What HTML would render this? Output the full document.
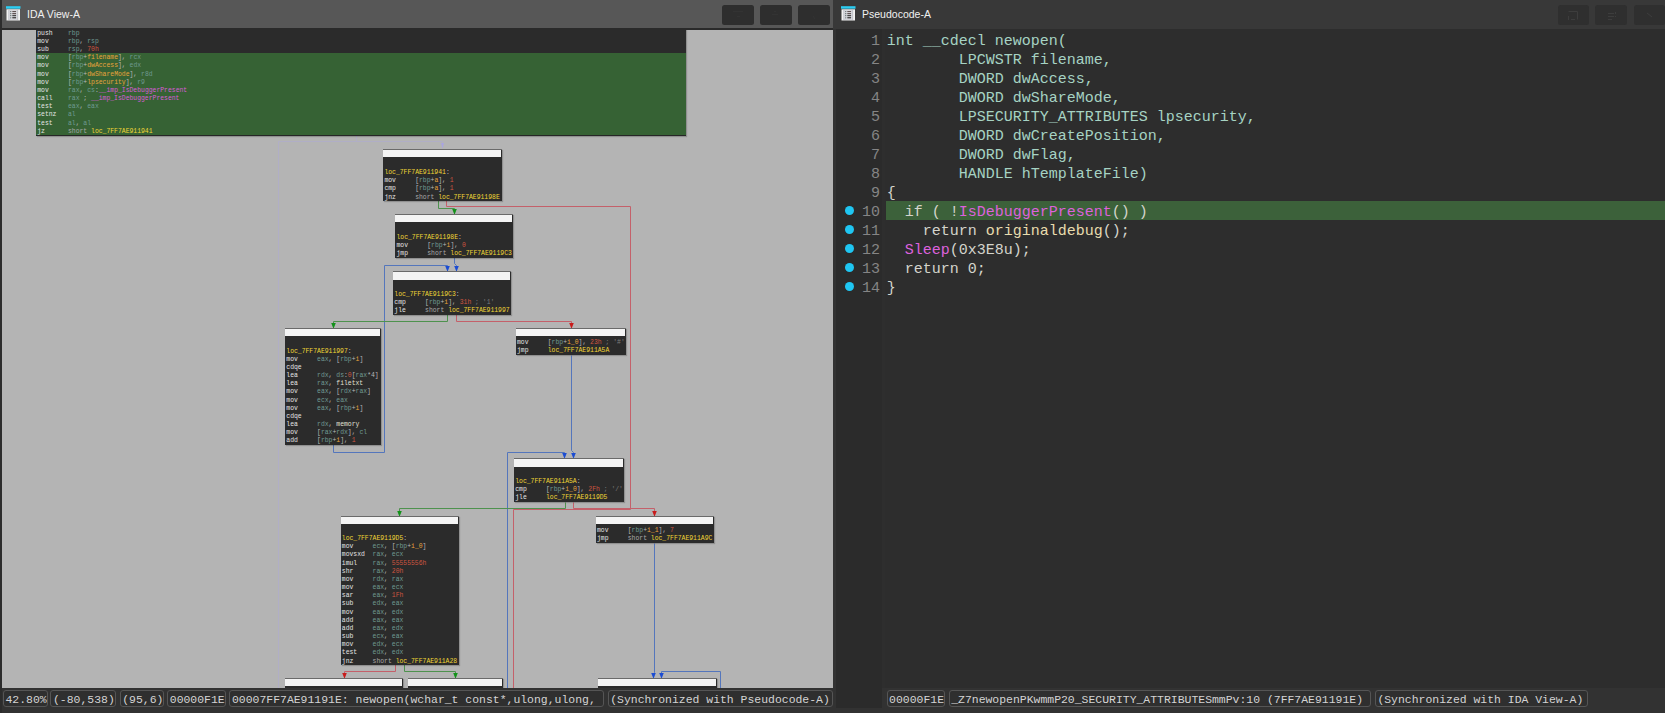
<!DOCTYPE html><html><head><meta charset="utf-8"><style>
*{margin:0;padding:0;box-sizing:border-box}
html,body{width:1665px;height:713px;overflow:hidden;background:#323232}
body{position:relative;font-family:"Liberation Sans",sans-serif}
.abs{position:absolute}
#lt{position:absolute;left:2px;top:0;width:831px;height:28px;background:#575757}
#lline{position:absolute;left:2px;top:28px;width:831px;height:2px;background:#2a2a2a}
#graph{position:absolute;left:2px;top:30px;width:831px;height:658px;background:#b4b4b4;overflow:hidden}
#ginner{position:absolute;left:-2px;top:-30px;width:833px;height:690px}
.nd{position:absolute;overflow:hidden;box-shadow:1px 1px 1px rgba(0,0,0,0.2);border-top:1px solid #6a6a6a}
.hd{position:absolute;left:0;right:1px;top:0;background:#f4f4f4}
.row{position:absolute;left:1.2px;height:8.17px;line-height:8.17px;font-family:"Liberation Mono",monospace;font-size:6.417px;white-space:pre}
.edges{position:absolute;left:0;top:0}
.btn{position:absolute;top:5px;width:31.5px;height:20px;border-radius:2.5px}
#rt{position:absolute;left:833px;top:0;width:832px;height:29px;background:#383838}
#code{position:absolute;left:885px;top:29px;width:780px;height:658.5px;background:#2d2d2d}
#gut{position:absolute;left:836px;top:29px;width:46px;height:678.5px;background:#2b2b2b}
#gut2{position:absolute;left:882px;top:29px;width:3px;height:659px;background:#2e2e2e}
.pl{position:absolute;left:886.7px;height:19px;line-height:19px;font-family:"Liberation Mono",monospace;font-size:15px;white-space:pre}
.ln{position:absolute;left:838px;width:42px;text-align:right;height:19px;line-height:19px;font-family:"Liberation Mono",monospace;font-size:15px;color:#858585}
.dot{position:absolute;left:845px;width:9.2px;height:9.2px;border-radius:50%;background:#1fc6f2}
#hl{position:absolute;left:886.2px;top:201px;width:779px;height:18.8px;background:#3c613a}
.sb{position:absolute;top:690px;height:17px;border:1px solid #555;border-radius:3px;background:#2f2f2f;font-family:"Liberation Mono",monospace;font-size:11.45px;line-height:14px;color:#d4d4d4;white-space:pre;overflow:hidden}
.sb span{position:absolute;left:1.6px;top:1.6px}
.ttl{position:absolute;top:6px;font-size:11.3px;color:#f0f0f0;line-height:16px;transform-origin:0 0;transform:scaleX(0.93)}
</style></head><body><div class="abs" style="left:0;top:0;width:2px;height:713px;background:#2c2c2c"></div><div id="lt"></div><div id="lline"></div><div class="abs" style="left:6px;top:5.5px"><svg width="15" height="15" viewBox="0 0 15 15"><rect x="0" y="0.2" width="14.5" height="2.5" fill="#2ccdf2"/><rect x="0.5" y="3.3" width="13.5" height="11.2" fill="#f2f2f2"/><rect x="2.2" y="3.8" width="10" height="10.2" fill="#c4c6cc"/><rect x="3.4" y="4.2" width="7.6" height="9.4" fill="#dcdde2"/><circle cx="4.8" cy="5.6" r="0.6" fill="#455"/><rect x="6.3" y="5.1" width="3.8" height="1" fill="#544"/><circle cx="4.8" cy="7.7" r="0.6" fill="#455"/><rect x="6.3" y="7.2" width="3.8" height="1" fill="#433"/><circle cx="4.8" cy="9.7" r="0.6" fill="#455"/><rect x="6.3" y="9.2" width="3.8" height="1" fill="#222"/><circle cx="4.8" cy="11.8" r="0.6" fill="#455"/><rect x="6.3" y="11.3" width="3.8" height="1" fill="#111"/></svg></div><div class="ttl" style="left:27px">IDA View-A</div><div class="btn" style="left:722.2px;background:#2e2e2e"></div><div class="btn" style="left:760.3px;background:#2e2e2e"></div><div class="btn" style="left:798.4px;background:#2e2e2e"></div><div id="graph"><div id="ginner"><svg class="edges" width="833" height="690" viewBox="0 0 833 690"><polyline fill="none" stroke="#b0aec6" stroke-width="1" points="356.5,135.5 356.5,141.5 278.5,141.5 278.5,690.5"/><polyline fill="none" stroke="#b0aec6" stroke-width="1" points="356.5,141.5 442.5,141.5 442.5,147.5"/><polygon fill="#a9a5e0" points="441.0,143.0 444.0,143.0 442.5,148.7"/><polyline fill="none" stroke="#4e924e" stroke-width="1" points="438.5,200.5 438.5,208.5 454.5,208.5 454.5,213.5"/><polygon fill="#13921a" points="452.2,209.0 456.8,209.0 454.5,214.7"/><polyline fill="none" stroke="#c4606a" stroke-width="1" points="446.5,200.5 446.5,206.5 630.5,206.5 630.5,509.5 513.5,509.5 513.5,690.5"/><polyline fill="none" stroke="#5476bc" stroke-width="1" points="454.5,257.5 454.5,263.5 456.5,265.5 456.5,270.5"/><polygon fill="#1c4cd2" points="454.2,266.0 458.8,266.0 456.5,271.7"/><polyline fill="none" stroke="#5476bc" stroke-width="1" points="333.5,444.5 333.5,452.5 384.5,452.5 384.5,265.5 447.5,265.5 447.5,270.5"/><polygon fill="#1c4cd2" points="445.2,266.0 449.8,266.0 447.5,271.7"/><polyline fill="none" stroke="#4e924e" stroke-width="1" points="447.5,314.5 447.5,321.5 333.5,321.5 333.5,327.5"/><polygon fill="#13921a" points="331.2,323.0 335.8,323.0 333.5,328.7"/><polyline fill="none" stroke="#c4606a" stroke-width="1" points="456.5,314.5 456.5,321.5 571.5,321.5 571.5,327.5"/><polygon fill="#c81c1c" points="569.2,323.0 573.8,323.0 571.5,328.7"/><polyline fill="none" stroke="#5476bc" stroke-width="1" points="571.5,355.5 571.5,450.5 573.5,452.5 573.5,457.5"/><polygon fill="#1c4cd2" points="571.2,453.0 575.8,453.0 573.5,458.7"/><polyline fill="none" stroke="#5476bc" stroke-width="1" points="507.5,690.5 507.5,452.5 564.5,452.5 564.5,457.5"/><polygon fill="#1c4cd2" points="562.2,453.0 566.8,453.0 564.5,458.7"/><polyline fill="none" stroke="#4e924e" stroke-width="1" points="565.5,502.5 565.5,508.5 399.5,508.5 399.5,515.5"/><polygon fill="#13921a" points="397.2,511.0 401.8,511.0 399.5,516.7"/><polyline fill="none" stroke="#c4606a" stroke-width="1" points="573.5,502.5 573.5,508.5 654.5,508.5 654.5,515.5"/><polygon fill="#c81c1c" points="652.2,511.0 656.8,511.0 654.5,516.7"/><polyline fill="none" stroke="#5476bc" stroke-width="1" points="654.5,543.5 654.5,672.5 653.5,674.5 653.5,677.5"/><polygon fill="#1c4cd2" points="651.2,673.0 655.8,673.0 653.5,678.7"/><polyline fill="none" stroke="#5476bc" stroke-width="1" points="720.5,690.5 720.5,671.5 661.5,671.5 661.5,677.5"/><polygon fill="#1c4cd2" points="659.2,673.0 663.8,673.0 661.5,678.7"/><polyline fill="none" stroke="#c4606a" stroke-width="1" points="395.5,664.5 395.5,671.5 344.5,671.5 344.5,677.5"/><polygon fill="#c81c1c" points="342.2,673.0 346.8,673.0 344.5,678.7"/><polyline fill="none" stroke="#4e924e" stroke-width="1" points="404.5,664.5 404.5,671.5 455.5,671.5 455.5,677.5"/><polygon fill="#13921a" points="453.2,673.0 457.8,673.0 455.5,678.7"/></svg><div class="nd" style="left:36px;top:28px;width:650.4px;height:107.5px;background:#2b2b2b;border-bottom:1.3px solid #262626"><div style="position:absolute;left:0;right:0;top:24.2px;height:82px;background:#366234"></div><div class="row" style="top:0.71px"><span style="color:#e4e4e4">push&#160;&#160;&#160;&#160;</span><span style="color:#6f9a92">rbp</span></div><div class="row" style="top:8.88px"><span style="color:#e4e4e4">mov&#160;&#160;&#160;&#160;&#160;</span><span style="color:#6f9a92">rbp</span><span style="color:#b8b8b8">,&#160;</span><span style="color:#6f9a92">rsp</span></div><div class="row" style="top:17.05px"><span style="color:#e4e4e4">sub&#160;&#160;&#160;&#160;&#160;</span><span style="color:#6f9a92">rsp</span><span style="color:#b8b8b8">,&#160;</span><span style="color:#cf5540">70h</span></div><div class="row" style="top:25.22px"><span style="color:#e4e4e4">mov&#160;&#160;&#160;&#160;&#160;</span><span style="color:#b8b8b8">[</span><span style="color:#6f9a92">rbp</span><span style="color:#b8b8b8">+</span><span style="color:#e8a23c">filename</span><span style="color:#b8b8b8">],&#160;</span><span style="color:#6f9a92">rcx</span></div><div class="row" style="top:33.39px"><span style="color:#e4e4e4">mov&#160;&#160;&#160;&#160;&#160;</span><span style="color:#b8b8b8">[</span><span style="color:#6f9a92">rbp</span><span style="color:#b8b8b8">+</span><span style="color:#e8a23c">dwAccess</span><span style="color:#b8b8b8">],&#160;</span><span style="color:#6f9a92">edx</span></div><div class="row" style="top:41.57px"><span style="color:#e4e4e4">mov&#160;&#160;&#160;&#160;&#160;</span><span style="color:#b8b8b8">[</span><span style="color:#6f9a92">rbp</span><span style="color:#b8b8b8">+</span><span style="color:#e8a23c">dwShareMode</span><span style="color:#b8b8b8">],&#160;</span><span style="color:#6f9a92">r8d</span></div><div class="row" style="top:49.73px"><span style="color:#e4e4e4">mov&#160;&#160;&#160;&#160;&#160;</span><span style="color:#b8b8b8">[</span><span style="color:#6f9a92">rbp</span><span style="color:#b8b8b8">+</span><span style="color:#e8a23c">lpsecurity</span><span style="color:#b8b8b8">],&#160;</span><span style="color:#6f9a92">r9</span></div><div class="row" style="top:57.90px"><span style="color:#e4e4e4">mov&#160;&#160;&#160;&#160;&#160;</span><span style="color:#6f9a92">rax</span><span style="color:#b8b8b8">,&#160;</span><span style="color:#6f9a92">cs</span><span style="color:#b8b8b8">:</span><span style="color:#d85cd8">__imp_IsDebuggerPresent</span></div><div class="row" style="top:66.08px"><span style="color:#e4e4e4">call&#160;&#160;&#160;&#160;</span><span style="color:#6f9a92">rax</span><span style="color:#b8b8b8">&#160;;&#160;</span><span style="color:#d85cd8">__imp_IsDebuggerPresent</span></div><div class="row" style="top:74.25px"><span style="color:#e4e4e4">test&#160;&#160;&#160;&#160;</span><span style="color:#6f9a92">eax</span><span style="color:#b8b8b8">,&#160;</span><span style="color:#6f9a92">eax</span></div><div class="row" style="top:82.42px"><span style="color:#e4e4e4">setnz&#160;&#160;&#160;</span><span style="color:#6f9a92">al</span></div><div class="row" style="top:90.59px"><span style="color:#e4e4e4">test&#160;&#160;&#160;&#160;</span><span style="color:#6f9a92">al</span><span style="color:#b8b8b8">,&#160;</span><span style="color:#6f9a92">al</span></div><div class="row" style="top:98.75px"><span style="color:#e4e4e4">jz&#160;&#160;&#160;&#160;&#160;&#160;</span><span style="color:#a8a8a8">short&#160;</span><span style="color:#f0d636">loc_7FF7AE911941</span></div></div><div class="nd" style="left:383.2px;top:148.5px;width:118.5px;height:52.1px;background:#2b2b2b;"><div class="hd" style="height:7.5px"></div><div class="row" style="top:19.61px"><span style="color:#f0d636">loc_7FF7AE911941</span><span style="color:#b8b8b8">:</span></div><div class="row" style="top:27.78px"><span style="color:#e4e4e4">mov&#160;&#160;&#160;&#160;&#160;</span><span style="color:#b8b8b8">[</span><span style="color:#6f9a92">rbp</span><span style="color:#b8b8b8">+</span><span style="color:#e8a23c">a</span><span style="color:#b8b8b8">],&#160;</span><span style="color:#cf5540">1</span></div><div class="row" style="top:35.96px"><span style="color:#e4e4e4">cmp&#160;&#160;&#160;&#160;&#160;</span><span style="color:#b8b8b8">[</span><span style="color:#6f9a92">rbp</span><span style="color:#b8b8b8">+</span><span style="color:#e8a23c">a</span><span style="color:#b8b8b8">],&#160;</span><span style="color:#cf5540">1</span></div><div class="row" style="top:44.12px"><span style="color:#e4e4e4">jnz&#160;&#160;&#160;&#160;&#160;</span><span style="color:#a8a8a8">short&#160;</span><span style="color:#f0d636">loc_7FF7AE91198E</span></div></div><div class="nd" style="left:395.3px;top:214.2px;width:117.8px;height:43.4px;background:#2b2b2b;"><div class="hd" style="height:7.2px"></div><div class="row" style="top:18.92px"><span style="color:#f0d636">loc_7FF7AE91198E</span><span style="color:#b8b8b8">:</span></div><div class="row" style="top:27.08px"><span style="color:#e4e4e4">mov&#160;&#160;&#160;&#160;&#160;</span><span style="color:#b8b8b8">[</span><span style="color:#6f9a92">rbp</span><span style="color:#b8b8b8">+</span><span style="color:#e8a23c">i</span><span style="color:#b8b8b8">],&#160;</span><span style="color:#cf5540">0</span></div><div class="row" style="top:35.26px"><span style="color:#e4e4e4">jmp&#160;&#160;&#160;&#160;&#160;</span><span style="color:#a8a8a8">short&#160;</span><span style="color:#f0d636">loc_7FF7AE9119C3</span></div></div><div class="nd" style="left:393.1px;top:271.4px;width:117.9px;height:43.3px;background:#2b2b2b;"><div class="hd" style="height:7.5px"></div><div class="row" style="top:18.72px"><span style="color:#f0d636">loc_7FF7AE9119C3</span><span style="color:#b8b8b8">:</span></div><div class="row" style="top:26.89px"><span style="color:#e4e4e4">cmp&#160;&#160;&#160;&#160;&#160;</span><span style="color:#b8b8b8">[</span><span style="color:#6f9a92">rbp</span><span style="color:#b8b8b8">+</span><span style="color:#e8a23c">i</span><span style="color:#b8b8b8">],&#160;</span><span style="color:#cf5540">31h</span><span style="color:#7c7c7c">&#160;;&#160;&#x27;1&#x27;</span></div><div class="row" style="top:35.05px"><span style="color:#e4e4e4">jle&#160;&#160;&#160;&#160;&#160;</span><span style="color:#a8a8a8">short&#160;</span><span style="color:#f0d636">loc_7FF7AE911997</span></div></div><div class="nd" style="left:285.1px;top:328.0px;width:95.7px;height:116.6px;background:#2b2b2b;"><div class="hd" style="height:7.2px"></div><div class="row" style="top:18.51px"><span style="color:#f0d636">loc_7FF7AE911997</span><span style="color:#b8b8b8">:</span></div><div class="row" style="top:26.69px"><span style="color:#e4e4e4">mov&#160;&#160;&#160;&#160;&#160;</span><span style="color:#6f9a92">eax</span><span style="color:#b8b8b8">,&#160;[</span><span style="color:#6f9a92">rbp</span><span style="color:#b8b8b8">+</span><span style="color:#e8a23c">i</span><span style="color:#b8b8b8">]</span></div><div class="row" style="top:34.85px"><span style="color:#e4e4e4">cdqe&#160;&#160;&#160;&#160;</span></div><div class="row" style="top:43.02px"><span style="color:#e4e4e4">lea&#160;&#160;&#160;&#160;&#160;</span><span style="color:#6f9a92">rdx</span><span style="color:#b8b8b8">,&#160;</span><span style="color:#6f9a92">ds</span><span style="color:#b8b8b8">:</span><span style="color:#cf5540">0</span><span style="color:#b8b8b8">[</span><span style="color:#6f9a92">rax</span><span style="color:#b8b8b8">*4]</span></div><div class="row" style="top:51.20px"><span style="color:#e4e4e4">lea&#160;&#160;&#160;&#160;&#160;</span><span style="color:#6f9a92">rax</span><span style="color:#b8b8b8">,&#160;</span><span style="color:#e0e0d4">filetxt</span></div><div class="row" style="top:59.37px"><span style="color:#e4e4e4">mov&#160;&#160;&#160;&#160;&#160;</span><span style="color:#6f9a92">eax</span><span style="color:#b8b8b8">,&#160;[</span><span style="color:#6f9a92">rdx</span><span style="color:#b8b8b8">+</span><span style="color:#6f9a92">rax</span><span style="color:#b8b8b8">]</span></div><div class="row" style="top:67.53px"><span style="color:#e4e4e4">mov&#160;&#160;&#160;&#160;&#160;</span><span style="color:#6f9a92">ecx</span><span style="color:#b8b8b8">,&#160;</span><span style="color:#6f9a92">eax</span></div><div class="row" style="top:75.71px"><span style="color:#e4e4e4">mov&#160;&#160;&#160;&#160;&#160;</span><span style="color:#6f9a92">eax</span><span style="color:#b8b8b8">,&#160;[</span><span style="color:#6f9a92">rbp</span><span style="color:#b8b8b8">+</span><span style="color:#e8a23c">i</span><span style="color:#b8b8b8">]</span></div><div class="row" style="top:83.88px"><span style="color:#e4e4e4">cdqe&#160;&#160;&#160;&#160;</span></div><div class="row" style="top:92.04px"><span style="color:#e4e4e4">lea&#160;&#160;&#160;&#160;&#160;</span><span style="color:#6f9a92">rdx</span><span style="color:#b8b8b8">,&#160;</span><span style="color:#e0e0d4">memory</span></div><div class="row" style="top:100.22px"><span style="color:#e4e4e4">mov&#160;&#160;&#160;&#160;&#160;</span><span style="color:#b8b8b8">[</span><span style="color:#6f9a92">rax</span><span style="color:#b8b8b8">+</span><span style="color:#6f9a92">rdx</span><span style="color:#b8b8b8">],&#160;</span><span style="color:#6f9a92">cl</span></div><div class="row" style="top:108.39px"><span style="color:#e4e4e4">add&#160;&#160;&#160;&#160;&#160;</span><span style="color:#b8b8b8">[</span><span style="color:#6f9a92">rbp</span><span style="color:#b8b8b8">+</span><span style="color:#e8a23c">i</span><span style="color:#b8b8b8">],&#160;</span><span style="color:#cf5540">1</span></div></div><div class="nd" style="left:515.8px;top:328.3px;width:110.4px;height:26.9px;background:#2b2b2b;"><div class="hd" style="height:7.0px"></div><div class="row" style="top:10.01px"><span style="color:#e4e4e4">mov&#160;&#160;&#160;&#160;&#160;</span><span style="color:#b8b8b8">[</span><span style="color:#6f9a92">rbp</span><span style="color:#b8b8b8">+</span><span style="color:#e8a23c">i_0</span><span style="color:#b8b8b8">],&#160;</span><span style="color:#cf5540">23h</span><span style="color:#7c7c7c">&#160;;&#160;&#x27;#&#x27;</span></div><div class="row" style="top:18.18px"><span style="color:#e4e4e4">jmp&#160;&#160;&#160;&#160;&#160;</span><span style="color:#f0d636">loc_7FF7AE911A5A</span></div></div><div class="nd" style="left:514.0px;top:458.1px;width:110.2px;height:44.2px;background:#2b2b2b;"><div class="hd" style="height:8.2px"></div><div class="row" style="top:19.01px"><span style="color:#f0d636">loc_7FF7AE911A5A</span><span style="color:#b8b8b8">:</span></div><div class="row" style="top:27.18px"><span style="color:#e4e4e4">cmp&#160;&#160;&#160;&#160;&#160;</span><span style="color:#b8b8b8">[</span><span style="color:#6f9a92">rbp</span><span style="color:#b8b8b8">+</span><span style="color:#e8a23c">i_0</span><span style="color:#b8b8b8">],&#160;</span><span style="color:#cf5540">2Fh</span><span style="color:#7c7c7c">&#160;;&#160;&#x27;/&#x27;</span></div><div class="row" style="top:35.35px"><span style="color:#e4e4e4">jle&#160;&#160;&#160;&#160;&#160;</span><span style="color:#f0d636">loc_7FF7AE9119D5</span></div></div><div class="nd" style="left:340.6px;top:516.2px;width:118.2px;height:148.5px;background:#2b2b2b;"><div class="hd" style="height:7.0px"></div><div class="row" style="top:17.91px"><span style="color:#f0d636">loc_7FF7AE9119D5</span><span style="color:#b8b8b8">:</span></div><div class="row" style="top:26.08px"><span style="color:#e4e4e4">mov&#160;&#160;&#160;&#160;&#160;</span><span style="color:#6f9a92">ecx</span><span style="color:#b8b8b8">,&#160;[</span><span style="color:#6f9a92">rbp</span><span style="color:#b8b8b8">+</span><span style="color:#e8a23c">i_0</span><span style="color:#b8b8b8">]</span></div><div class="row" style="top:34.25px"><span style="color:#e4e4e4">movsxd&#160;&#160;</span><span style="color:#6f9a92">rax</span><span style="color:#b8b8b8">,&#160;</span><span style="color:#6f9a92">ecx</span></div><div class="row" style="top:42.42px"><span style="color:#e4e4e4">imul&#160;&#160;&#160;&#160;</span><span style="color:#6f9a92">rax</span><span style="color:#b8b8b8">,&#160;</span><span style="color:#cf5540">55555556h</span></div><div class="row" style="top:50.59px"><span style="color:#e4e4e4">shr&#160;&#160;&#160;&#160;&#160;</span><span style="color:#6f9a92">rax</span><span style="color:#b8b8b8">,&#160;</span><span style="color:#cf5540">20h</span></div><div class="row" style="top:58.76px"><span style="color:#e4e4e4">mov&#160;&#160;&#160;&#160;&#160;</span><span style="color:#6f9a92">rdx</span><span style="color:#b8b8b8">,&#160;</span><span style="color:#6f9a92">rax</span></div><div class="row" style="top:66.93px"><span style="color:#e4e4e4">mov&#160;&#160;&#160;&#160;&#160;</span><span style="color:#6f9a92">eax</span><span style="color:#b8b8b8">,&#160;</span><span style="color:#6f9a92">ecx</span></div><div class="row" style="top:75.11px"><span style="color:#e4e4e4">sar&#160;&#160;&#160;&#160;&#160;</span><span style="color:#6f9a92">eax</span><span style="color:#b8b8b8">,&#160;</span><span style="color:#cf5540">1Fh</span></div><div class="row" style="top:83.27px"><span style="color:#e4e4e4">sub&#160;&#160;&#160;&#160;&#160;</span><span style="color:#6f9a92">edx</span><span style="color:#b8b8b8">,&#160;</span><span style="color:#6f9a92">eax</span></div><div class="row" style="top:91.44px"><span style="color:#e4e4e4">mov&#160;&#160;&#160;&#160;&#160;</span><span style="color:#6f9a92">eax</span><span style="color:#b8b8b8">,&#160;</span><span style="color:#6f9a92">edx</span></div><div class="row" style="top:99.62px"><span style="color:#e4e4e4">add&#160;&#160;&#160;&#160;&#160;</span><span style="color:#6f9a92">eax</span><span style="color:#b8b8b8">,&#160;</span><span style="color:#6f9a92">eax</span></div><div class="row" style="top:107.78px"><span style="color:#e4e4e4">add&#160;&#160;&#160;&#160;&#160;</span><span style="color:#6f9a92">eax</span><span style="color:#b8b8b8">,&#160;</span><span style="color:#6f9a92">edx</span></div><div class="row" style="top:115.95px"><span style="color:#e4e4e4">sub&#160;&#160;&#160;&#160;&#160;</span><span style="color:#6f9a92">ecx</span><span style="color:#b8b8b8">,&#160;</span><span style="color:#6f9a92">eax</span></div><div class="row" style="top:124.12px"><span style="color:#e4e4e4">mov&#160;&#160;&#160;&#160;&#160;</span><span style="color:#6f9a92">edx</span><span style="color:#b8b8b8">,&#160;</span><span style="color:#6f9a92">ecx</span></div><div class="row" style="top:132.29px"><span style="color:#e4e4e4">test&#160;&#160;&#160;&#160;</span><span style="color:#6f9a92">edx</span><span style="color:#b8b8b8">,&#160;</span><span style="color:#6f9a92">edx</span></div><div class="row" style="top:140.46px"><span style="color:#e4e4e4">jnz&#160;&#160;&#160;&#160;&#160;</span><span style="color:#a8a8a8">short&#160;</span><span style="color:#f0d636">loc_7FF7AE911A28</span></div></div><div class="nd" style="left:595.8px;top:516.0px;width:118.0px;height:27.3px;background:#2b2b2b;"><div class="hd" style="height:7.3px"></div><div class="row" style="top:10.11px"><span style="color:#e4e4e4">mov&#160;&#160;&#160;&#160;&#160;</span><span style="color:#b8b8b8">[</span><span style="color:#6f9a92">rbp</span><span style="color:#b8b8b8">+</span><span style="color:#e8a23c">i_1</span><span style="color:#b8b8b8">],&#160;</span><span style="color:#cf5540">7</span></div><div class="row" style="top:18.28px"><span style="color:#e4e4e4">jmp&#160;&#160;&#160;&#160;&#160;</span><span style="color:#a8a8a8">short&#160;</span><span style="color:#f0d636">loc_7FF7AE911A9C</span></div></div><div class="nd" style="left:285.4px;top:678.2px;width:117.9px;height:21.8px;background:#2b2b2b;"><div class="hd" style="height:7.0px"></div></div><div class="nd" style="left:407.8px;top:678.2px;width:94.9px;height:21.8px;background:#2b2b2b;"><div class="hd" style="height:7.0px"></div></div><div class="nd" style="left:598.0px;top:678.2px;width:118.5px;height:21.8px;background:#2b2b2b;"><div class="hd" style="height:7.0px"></div></div></div></div><div class="abs" style="left:833px;top:29px;width:3px;height:684px;background:#323232"></div><div id="rt"></div><div class="abs" style="left:841px;top:5.5px"><svg width="15" height="15" viewBox="0 0 15 15"><rect x="0" y="0.2" width="14.5" height="2.5" fill="#2ccdf2"/><rect x="0.5" y="3.3" width="13.5" height="11.2" fill="#f2f2f2"/><rect x="2.2" y="3.8" width="10" height="10.2" fill="#c4c6cc"/><rect x="3.4" y="4.2" width="7.6" height="9.4" fill="#dcdde2"/><circle cx="4.8" cy="5.6" r="0.6" fill="#455"/><rect x="6.3" y="5.1" width="3.8" height="1" fill="#544"/><circle cx="4.8" cy="7.7" r="0.6" fill="#455"/><rect x="6.3" y="7.2" width="3.8" height="1" fill="#433"/><circle cx="4.8" cy="9.7" r="0.6" fill="#455"/><rect x="6.3" y="9.2" width="3.8" height="1" fill="#222"/><circle cx="4.8" cy="11.8" r="0.6" fill="#455"/><rect x="6.3" y="11.3" width="3.8" height="1" fill="#111"/></svg></div><div class="ttl" style="left:861.7px">Pseudocode-A</div><div class="btn" style="left:1557.6px;background:#2f2f2f"></div><div class="btn" style="left:1595.0px;background:#2f2f2f"></div><div class="btn" style="left:1633.8px;background:#2f2f2f"></div><svg class="abs" style="left:1555px;top:3px" width="110" height="24" viewBox="0 0 110 24"><g stroke="#3d3d3d" stroke-width="1" fill="none"><path d="M13.5 8.5h9M22.5 8.5v8M13.5 13v4M16 16.5h4"/><path d="M53 10.5h6M53 13.5h6M53 16.5h4M60.5 9v2M60.5 13v1"/><path d="M92 10l5 4"/></g></svg><svg class="abs" style="left:718px;top:2px" width="116" height="26" viewBox="0 0 116 26"><g stroke="#333333" stroke-width="1" fill="none"><path d="M15 9.5h10M19 14.5h3"/><path d="M54 12.5h6M56 9.5h2"/><path d="M95 14l2 3"/></g></svg><div id="code"></div><div id="gut"></div><div id="gut2"></div><div id="hl"></div><div class="pl" style="top:31.60px"><span style="color:#a6d3c3">int&#160;__cdecl&#160;newopen(</span></div><div class="ln" style="top:31.60px">1</div><div class="pl" style="top:50.63px"><span style="color:#a6d3c3">&#160;&#160;&#160;&#160;&#160;&#160;&#160;&#160;LPCWSTR&#160;filename,</span></div><div class="ln" style="top:50.63px">2</div><div class="pl" style="top:69.66px"><span style="color:#a6d3c3">&#160;&#160;&#160;&#160;&#160;&#160;&#160;&#160;DWORD&#160;dwAccess,</span></div><div class="ln" style="top:69.66px">3</div><div class="pl" style="top:88.69px"><span style="color:#a6d3c3">&#160;&#160;&#160;&#160;&#160;&#160;&#160;&#160;DWORD&#160;dwShareMode,</span></div><div class="ln" style="top:88.69px">4</div><div class="pl" style="top:107.72px"><span style="color:#a6d3c3">&#160;&#160;&#160;&#160;&#160;&#160;&#160;&#160;LPSECURITY_ATTRIBUTES&#160;lpsecurity,</span></div><div class="ln" style="top:107.72px">5</div><div class="pl" style="top:126.75px"><span style="color:#a6d3c3">&#160;&#160;&#160;&#160;&#160;&#160;&#160;&#160;DWORD&#160;dwCreatePosition,</span></div><div class="ln" style="top:126.75px">6</div><div class="pl" style="top:145.78px"><span style="color:#a6d3c3">&#160;&#160;&#160;&#160;&#160;&#160;&#160;&#160;DWORD&#160;dwFlag,</span></div><div class="ln" style="top:145.78px">7</div><div class="pl" style="top:164.81px"><span style="color:#a6d3c3">&#160;&#160;&#160;&#160;&#160;&#160;&#160;&#160;HANDLE&#160;hTemplateFile)</span></div><div class="ln" style="top:164.81px">8</div><div class="pl" style="top:183.84px"><span style="color:#d4d4cc">{</span></div><div class="ln" style="top:183.84px">9</div><div class="pl" style="top:202.87px"><span style="color:#d4d4cc">&#160;&#160;if&#160;(&#160;!</span><span style="color:#dc62dc">IsDebuggerPresent</span><span style="color:#d4d4cc">()&#160;)</span></div><div class="ln" style="top:202.87px">10</div><div class="dot" style="top:205.77px"></div><div class="pl" style="top:221.90px"><span style="color:#d4d4cc">&#160;&#160;&#160;&#160;return&#160;</span><span style="color:#e8dcae">originaldebug</span><span style="color:#d4d4cc">();</span></div><div class="ln" style="top:221.90px">11</div><div class="dot" style="top:224.80px"></div><div class="pl" style="top:240.93px"><span style="color:#dc62dc">&#160;&#160;Sleep</span><span style="color:#d4d4cc">(0x3E8u);</span></div><div class="ln" style="top:240.93px">12</div><div class="dot" style="top:243.83px"></div><div class="pl" style="top:259.96px"><span style="color:#d4d4cc">&#160;&#160;return&#160;0;</span></div><div class="ln" style="top:259.96px">13</div><div class="dot" style="top:262.86px"></div><div class="pl" style="top:278.99px"><span style="color:#d4d4cc">}</span></div><div class="ln" style="top:278.99px">14</div><div class="dot" style="top:281.89px"></div><div class="sb" style="left:2.9px;width:44.7px"><span>42.80%</span></div><div class="sb" style="left:50.4px;width:66.1px"><span>(-80,538)</span></div><div class="sb" style="left:119.6px;width:44.7px"><span>(95,6)</span></div><div class="sb" style="left:167.2px;width:59.1px"><span>00000F1E</span></div><div class="sb" style="left:229.4px;width:374.6px"><span>00007FF7AE91191E:&#160;newopen(wchar_t&#160;const*,ulong,ulong,</span></div><div class="sb" style="left:607.6px;width:225.2px"><span>(Synchronized&#160;with&#160;Pseudocode-A)</span></div><div class="sb" style="left:886.5px;width:58.9px"><span>00000F1E</span></div><div class="sb" style="left:948.6px;width:422.6px"><span>_Z7newopenPKwmmP20_SECURITY_ATTRIBUTESmmPv:10&#160;(7FF7AE91191E)</span></div><div class="sb" style="left:1374.8px;width:212.9px"><span>(Synchronized&#160;with&#160;IDA&#160;View-A)</span></div></body></html>
